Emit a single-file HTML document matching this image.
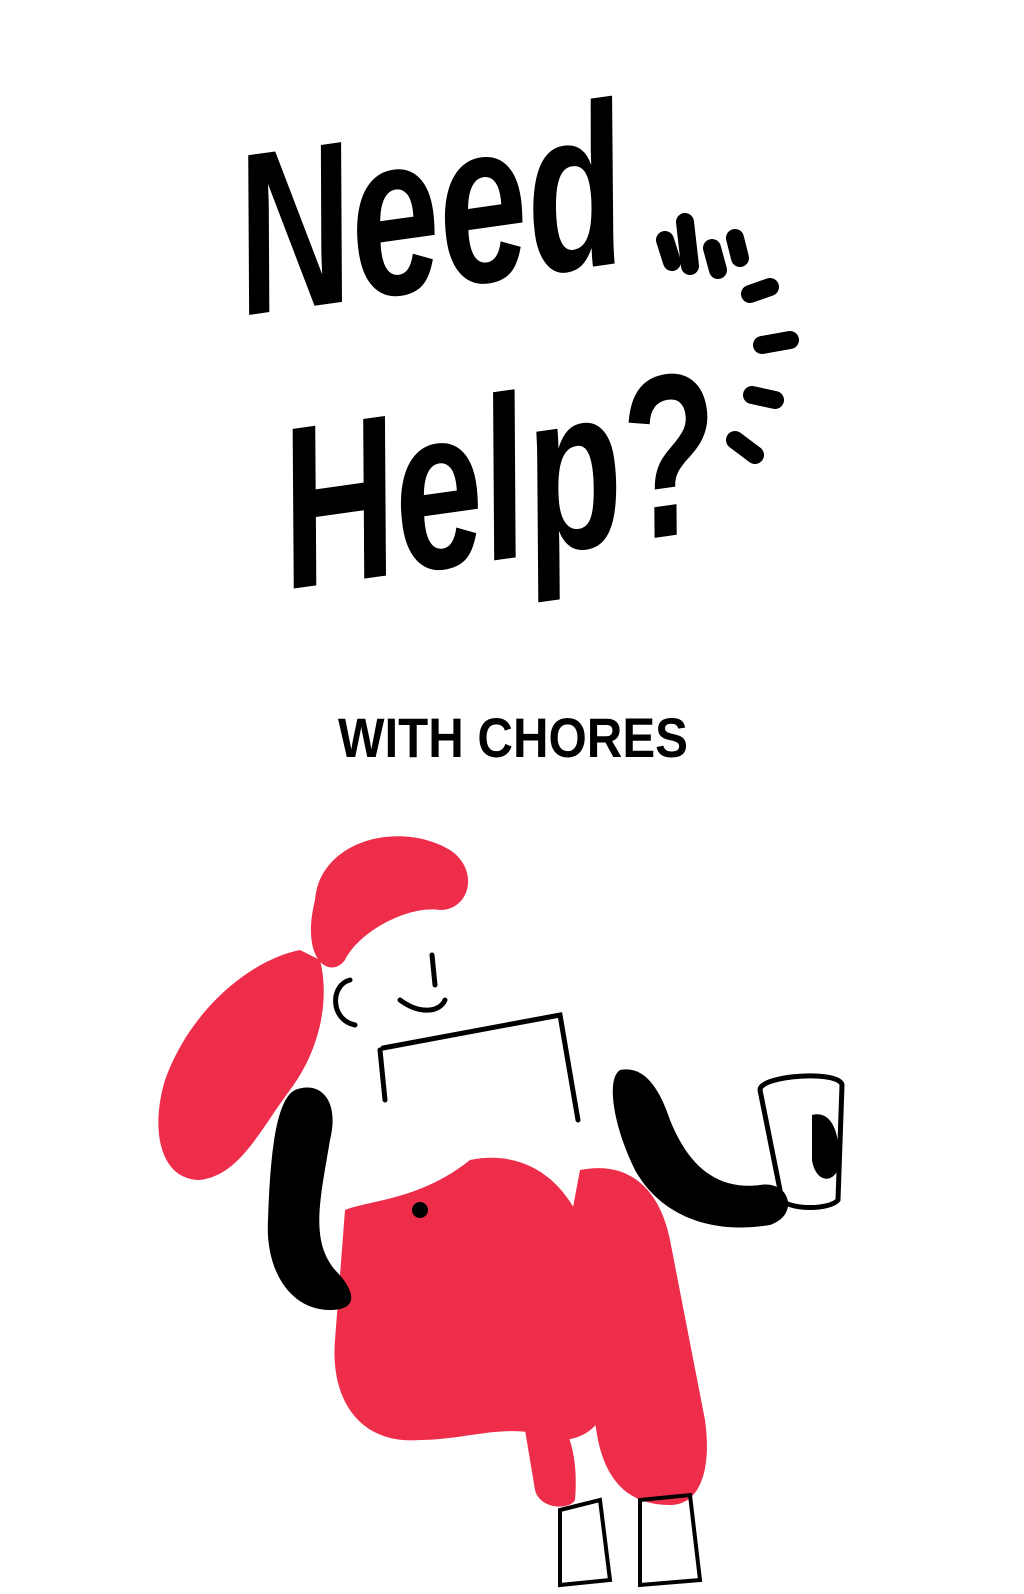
<!DOCTYPE html>
<html><head><meta charset="utf-8"><style>
html,body{margin:0;padding:0;background:#fff;}
body{width:1024px;height:1594px;overflow:hidden;}
svg{display:block}
</style></head><body>
<svg width="1024" height="1594" viewBox="0 0 1024 1594" xmlns="http://www.w3.org/2000/svg">
<rect width="1024" height="1594" fill="#fff"/>
<text x="232" y="290" font-family="Liberation Sans, sans-serif" font-weight="bold" font-style="italic" font-size="230" textLength="390" lengthAdjust="spacingAndGlyphs" fill="#000" transform="rotate(-8 420 200)">Need</text>
<text x="275" y="560" font-family="Liberation Sans, sans-serif" font-weight="bold" font-style="italic" font-size="230" textLength="440" lengthAdjust="spacingAndGlyphs" fill="#000" transform="rotate(-8 490 460)">Help?</text>
<g stroke="#000" stroke-width="18" stroke-linecap="round" fill="none">
<line x1="665" y1="240" x2="672" y2="262"/>
<line x1="685" y1="222" x2="690" y2="266"/>
<line x1="712" y1="248" x2="718" y2="270"/>
<line x1="735" y1="238" x2="740" y2="258"/>
<line x1="750" y1="294" x2="770" y2="287"/>
<line x1="762" y1="345" x2="790" y2="340"/>
<line x1="752" y1="395" x2="775" y2="400"/>
<line x1="735" y1="440" x2="755" y2="455"/>
</g>
<text x="338" y="757" font-family="Liberation Sans Narrow, Liberation Sans, sans-serif" font-weight="bold" font-size="56" textLength="350" lengthAdjust="spacingAndGlyphs" fill="#000">WITH CHORES</text>
<g fill="#ee2d4b">
<path d="M315 900 C320 840 400 820 450 850 C480 870 470 910 440 910 C410 905 360 930 345 960 C330 980 300 960 315 900Z"/>
<path d="M300 950 C250 960 190 1010 165 1080 C150 1130 160 1180 200 1180 C240 1175 260 1130 290 1090 C320 1050 330 1000 320 960Z"/>
<path d="M470 1160 C520 1150 560 1175 580 1220 L610 1350 C620 1400 600 1440 560 1440 C510 1420 470 1440 420 1440 C360 1445 330 1400 335 1340 L345 1210 C370 1200 420 1200 470 1160Z"/>
<path d="M580 1170 C630 1160 660 1190 670 1240 L705 1420 C712 1470 700 1505 670 1505 C620 1505 600 1470 595 1420 L565 1250Z"/>
<path d="M520 1400 C560 1400 580 1440 575 1500 C570 1510 540 1510 535 1490Z"/>
</g>
<g stroke="#000" fill="none" stroke-width="5" stroke-linecap="round">
<path d="M380 1050 L385 1100 M383 1048 L560 1015 L578 1120"/>
<path d="M350 980 C330 985 330 1020 355 1025"/>
<path d="M400 1000 C420 1015 440 1012 445 1000"/>
<path d="M432 955 L435 985"/>
<path d="M760 1090 C760 1075 840 1070 842 1085 L838 1200 C830 1210 790 1210 782 1200Z"/>
<path d="M560 1510 L600 1500 L610 1580 L560 1585Z M640 1500 L690 1495 L700 1580 L640 1585Z" stroke-width="4"/>
</g>
<g fill="#000">
<path d="M295 1090 C320 1080 340 1100 330 1140 C320 1200 310 1240 335 1270 C355 1290 360 1310 330 1310 C290 1310 265 1270 268 1220 C270 1160 275 1100 295 1090Z"/>
<path d="M620 1070 C645 1065 660 1090 670 1120 C690 1170 720 1190 760 1185 C790 1180 800 1215 770 1225 C710 1235 660 1215 635 1170 C615 1130 605 1080 620 1070Z"/>
<path d="M812 1115 C830 1110 842 1130 838 1170 C830 1185 815 1180 812 1160Z"/>
<circle cx="420" cy="1210" r="8"/>
</g>
</svg>
</body></html>
